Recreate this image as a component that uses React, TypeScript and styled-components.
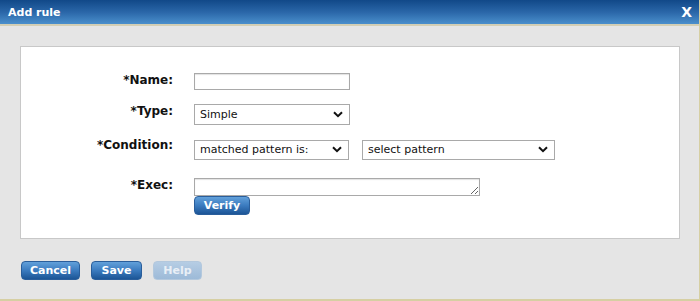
import styled, { createGlobalStyle } from "styled-components";

const GlobalStyle = createGlobalStyle`
  body {
    margin: 0;
    font-family: "DejaVu Sans", Verdana, sans-serif;
  }
`;

const Dialog = styled.div`
  width: 700px;
  height: 301px;
  box-sizing: border-box;
  background-color: #e5e5e5;
  border-right: 1px solid #d6cfa3;
  border-bottom: 2px solid #d6cfa3;
  display: flex;
  flex-direction: column;
`;

const TitleBar = styled.div`
  height: 24px;
  flex-shrink: 0;
  display: flex;
  align-items: center;
  justify-content: space-between;
  padding: 0 7px 0 8px;
  background: linear-gradient(to bottom, #114888 0%, #2a66a8 50%, #4a8fcc 100%);
  border-bottom: 2px solid #d3ceb4;
  color: #ffffff;
  font-weight: bold;
  font-size: 11px;
`;

const CloseX = styled.span`
  font-size: 14px;
  font-weight: bold;
  cursor: pointer;
`;

const Body = styled.div`
  padding: 20px 19px 0 20px;
`;

const Panel = styled.div`
  height: 193px;
  box-sizing: border-box;
  background: #ffffff;
  border: 1px solid #c8c8c8;
  padding-top: 26px;
`;

const Row = styled.div<{ gap: number }>`
  display: grid;
  grid-template-columns: 152px 1fr;
  column-gap: 21px;
  margin-bottom: ${(props) => props.gap}px;
`;

const Label = styled.label<{ offset?: number }>`
  text-align: right;
  font-weight: bold;
  font-size: 12px;
  color: #111111;
  padding-top: ${(props) => props.offset ?? 0}px;
`;

const Fields = styled.div`
  display: flex;
  align-items: flex-start;
  gap: 13px;
`;

const Stack = styled.div`
  display: flex;
  flex-direction: column;
  align-items: flex-start;
`;

const TextInput = styled.input`
  width: 156px;
  height: 17px;
  box-sizing: border-box;
  border: 1px solid #a9a9a9;
  box-shadow: inset 0 1px 1px rgba(0, 0, 0, 0.12);
  margin: 0;
  padding: 0 3px;
  font-family: inherit;
  font-size: 11px;
`;

const SelectWrap = styled.div`
  position: relative;
  display: inline-block;
`;

const Select = styled.select<{ w: number; h: number }>`
  appearance: none;
  width: ${(props) => props.w}px;
  height: ${(props) => props.h}px;
  box-sizing: border-box;
  border: 1px solid #a9a9a9;
  border-radius: 0;
  background: #ffffff;
  margin: 0;
  padding: 0 20px 0 5px;
  font-family: inherit;
  font-size: 11px;
  color: #111111;
`;

const Chevron = styled.svg`
  position: absolute;
  right: 7px;
  top: 50%;
  margin-top: -3px;
  pointer-events: none;
`;

const TextArea = styled.textarea`
  width: 286px;
  height: 18px;
  box-sizing: border-box;
  border: 1px solid #a9a9a9;
  box-shadow: inset 0 1px 1px rgba(0, 0, 0, 0.12);
  margin: 0;
  padding: 0 3px;
  font-family: inherit;
  font-size: 11px;
  resize: both;
  display: block;
`;

const Button = styled.button<{ w: number; disabled?: boolean }>`
  width: ${(props) => props.w}px;
  height: 19px;
  box-sizing: border-box;
  padding: 0;
  border-radius: 4px;
  border: 1px solid ${(props) => (props.disabled ? "#b3c8dd" : "#2a5e9b")};
  background: ${(props) =>
    props.disabled
      ? "linear-gradient(to bottom, #b6cde4, #9dbad8)"
      : "linear-gradient(to bottom, #62a0da 0%, #3b7bbf 50%, #1c5596 100%)"};
  color: ${(props) => (props.disabled ? "#e9eff6" : "#ffffff")};
  font-family: inherit;
  font-weight: bold;
  font-size: 11px;
  cursor: ${(props) => (props.disabled ? "default" : "pointer")};
`;

const Footer = styled.div`
  display: flex;
  gap: 11px;
  padding: 22px 0 0 21px;
`;

function Arrow() {
  return (
    <Chevron width="10" height="7" viewBox="0 0 10 7">
      <path d="M1 1.2 L5 5.2 L9 1.2" fill="none" stroke="#111" strokeWidth="2" />
    </Chevron>
  );
}

function App() {
  return (
    <>
      <GlobalStyle />
      <Dialog>
        <TitleBar>
          <span>Add rule</span>
          <CloseX>X</CloseX>
        </TitleBar>
        <Body>
          <Panel>
            <Row gap={13}>
              <Label>*Name:</Label>
              <Fields>
                <TextInput type="text" />
              </Fields>
            </Row>
            <Row gap={13}>
              <Label offset={1}>*Type:</Label>
              <Fields>
                <SelectWrap>
                  <Select w={156} h={21} defaultValue="simple">
                    <option value="simple">Simple</option>
                  </Select>
                  <Arrow />
                </SelectWrap>
              </Fields>
            </Row>
            <Row gap={18}>
              <Label offset={0}>*Condition:</Label>
              <Fields>
                <SelectWrap>
                  <Select w={155} h={20} defaultValue="matched">
                    <option value="matched">matched pattern is:</option>
                  </Select>
                  <Arrow />
                </SelectWrap>
                <SelectWrap>
                  <Select w={193} h={20} defaultValue="">
                    <option value="">select pattern</option>
                  </Select>
                  <Arrow />
                </SelectWrap>
              </Fields>
            </Row>
            <Row gap={0}>
              <Label>*Exec:</Label>
              <Stack>
                <TextArea />
                <Button w={56}>Verify</Button>
              </Stack>
            </Row>
          </Panel>
        </Body>
        <Footer>
          <Button w={59}>Cancel</Button>
          <Button w={51}>Save</Button>
          <Button w={49} disabled>
            Help
          </Button>
        </Footer>
      </Dialog>
    </>
  );
}

export default App;
